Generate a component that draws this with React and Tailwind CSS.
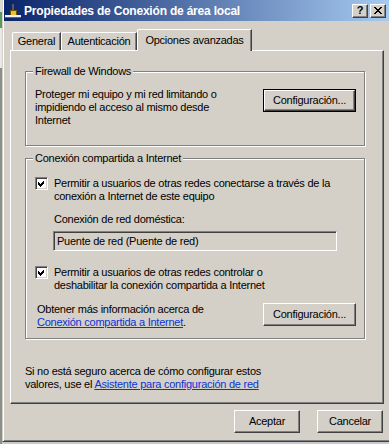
import React from 'react';

const raised =
  'border border-t-white border-l-white border-r-[#404040] border-b-[#404040] shadow-[inset_-1px_-1px_0_#808080] bg-[#d4d0c8]';
const sunken =
  'border border-t-[#808080] border-l-[#808080] border-r-white border-b-white shadow-[inset_1px_1px_0_#404040,inset_-1px_-1px_0_#d4d0c8]';

function Button({ children, isDefault, className = '' }) {
  if (isDefault) {
    return (
      <div className={`border border-black ${className}`}>
        <div className={`h-full w-full flex items-center justify-center ${raised}`}>{children}</div>
      </div>
    );
  }
  return <div className={`flex items-center justify-center ${raised} ${className}`}>{children}</div>;
}

function Checkbox() {
  return (
    <div className={`w-[13px] h-[13px] shrink-0 bg-white ${sunken} flex items-start justify-start p-px`}>
      <svg width="9" height="9" viewBox="0 0 9 9" shapeRendering="crispEdges">
        <polygon points="1,3 3,5 7,1 7,4 3,8 1,6" fill="black" />
      </svg>
    </div>
  );
}

function GroupBox({ label, className = '', children }) {
  return (
    <div className={`relative w-[340px] border border-[#808080] shadow-[1px_1px_0_white,inset_1px_1px_0_white] ${className}`}>
      <span className="absolute left-[7px] -top-[7px] px-[2px] bg-[#d4d0c8]">{label}</span>
      {children}
    </div>
  );
}

const Link = ({ children }) => <span className="text-[#0b33d6] underline underline-offset-1">{children}</span>;

export default function App() {
  return (
    <div className="w-[389px] h-[444px] overflow-hidden flex bg-[#c9c9c9] font-['Liberation_Sans',Arial,sans-serif] text-[11px] leading-[13px] tracking-[-0.25px] text-black">
      {/* background behind the window */}
      <div className="w-[2px] shrink-0 flex flex-col">
        <div className="h-[12px] bg-[#d8d8d8]" />
        <div className="h-[16px] bg-[#5c9a5c]" />
        <div className="h-[40px] bg-[#e8e8e8]" />
        <div className="flex-1 bg-[#8a8f8c]" />
      </div>

      <div className="flex-1 h-[442px] flex flex-col bg-[#d4d0c8] border-l border-l-[#d4d0c8] border-b border-b-[#404040] pl-px shadow-[inset_1px_0_0_white,inset_0_-1px_0_#808080]">
        {/* title bar */}
        <div className="h-[21px] shrink-0 flex items-center bg-linear-to-r/srgb from-[#0a246a] to-[#a6caf0]">
          <svg width="16" height="16" viewBox="0 0 16 16" className="ml-px shrink-0" shapeRendering="crispEdges">
            <rect x="7" y="1" width="2" height="8" fill="#5a5a5a" />
            <rect x="5" y="7" width="6" height="5" fill="#e8c030" stroke="#6b5210" strokeWidth="1" />
            <rect x="0" y="12" width="16" height="2" fill="#f0f0f0" />
            <rect x="0" y="14" width="16" height="1" fill="#606060" />
          </svg>
          <span className="ml-[3px] text-white font-bold text-[12px] tracking-[-0.2px] leading-[14px]">
            Propiedades de Conexión de área local
          </span>
          <div className="ml-auto mr-[3px] flex gap-[2px]">
            <div className={`w-[16px] h-[14px] flex items-center justify-center ${raised}`}>
              <span className="font-bold text-[11px] leading-[11px] tracking-normal">?</span>
            </div>
            <div className={`w-[16px] h-[14px] flex items-center justify-center ${raised}`}>
              <svg width="8" height="7" viewBox="0 0 8 7" shapeRendering="crispEdges">
                <path d="M0.5 0 L7.5 7 M7.5 0 L0.5 7" stroke="black" strokeWidth="1.6" />
              </svg>
            </div>
          </div>
        </div>

        {/* tabs */}
        <div className="mt-[8px] pl-[8px] flex items-end">
          <div className="w-[49px] h-[18px] flex items-center justify-center border-t border-l border-r border-t-white border-l-white border-r-[#404040] shadow-[inset_-1px_0_0_#808080] rounded-tl-[2px]">
            General
          </div>
          <div className="w-[76px] h-[18px] flex items-center justify-center border-t border-l border-r border-t-white border-l-white border-r-[#404040] shadow-[inset_-1px_0_0_#808080] rounded-tl-[2px]">
            Autenticación
          </div>
          <div className="relative z-10 -mb-px w-[115px] h-[22px] flex items-center justify-center bg-[#d4d0c8] border-t border-l border-r border-t-white border-l-white border-r-[#404040] shadow-[inset_-1px_0_0_#808080] rounded-tl-[2px]">
            Opciones avanzadas
          </div>
        </div>

        {/* tab panel */}
        <div className={`ml-[6px] w-[374px] h-[354px] shrink-0 px-[14px] pt-[20px] ${raised}`}>
          <GroupBox label="Firewall de Windows" className="h-[75px]">
            <div className="flex items-start pt-[16px] pl-[9px] pr-[8px]">
              <p>
                Proteger mi equipo y mi red limitando o<br />
                impidiendo el acceso al mismo desde<br />
                Internet
              </p>
              <Button isDefault className="ml-auto mt-px w-[93px] h-[23px]">
                Configuración...
              </Button>
            </div>
          </GroupBox>

          <GroupBox label="Conexión compartida a Internet" className="mt-[12px] h-[181px]">
            <div className="pt-[18px] flex flex-col">
              <div className="flex items-start gap-[6px] pl-[9px]">
                <Checkbox />
                <p>
                  Permitir a usuarios de otras redes conectarse a través de la<br />
                  conexión a Internet de este equipo
                </p>
              </div>
              <p className="mt-[10px] pl-[28px]">Conexión de red doméstica:</p>
              <div className={`mt-[5px] ml-[27px] w-[284px] h-[20px] flex items-center pl-[3px] ${sunken}`}>
                Puente de red (Puente de red)
              </div>
              <div className="mt-[15px] flex items-start gap-[6px] pl-[9px]">
                <Checkbox />
                <p>
                  Permitir a usuarios de otras redes controlar o<br />
                  deshabilitar la conexión compartida a Internet
                </p>
              </div>
              <div className="mt-[11px] flex items-start pl-[11px] pr-[8px]">
                <p>
                  Obtener más información acerca de<br />
                  <Link>Conexión compartida a Internet</Link>.
                </p>
                <Button className="ml-auto w-[93px] h-[23px]">Configuración...</Button>
              </div>
            </div>
          </GroupBox>

          <p className="mt-[26px]">
            Si no está seguro acerca de cómo configurar estos<br />
            valores, use el <Link>Asistente para configuración de red</Link>
          </p>
        </div>

        {/* dialog buttons */}
        <div className="mt-[6px] ml-[6px] w-[374px] pr-px flex justify-end gap-[17px]">
          <Button className="w-[66px] h-[23px]">Aceptar</Button>
          <Button className="w-[66px] h-[23px]">Cancelar</Button>
        </div>
      </div>
    </div>
  );
}
